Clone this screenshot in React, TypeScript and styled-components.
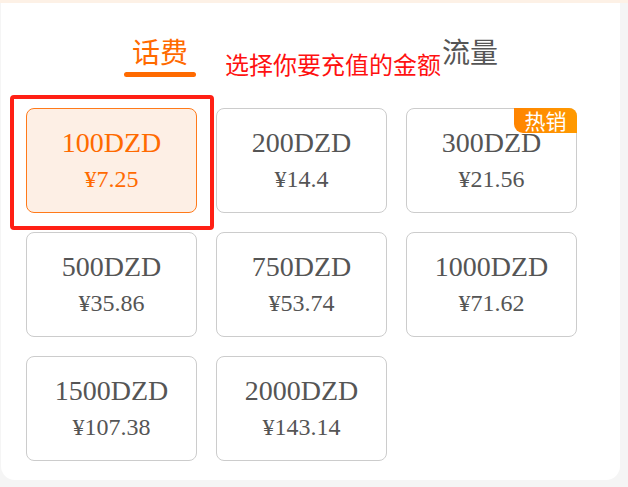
import React from 'react';
import styled, { createGlobalStyle } from 'styled-components';

const plans = [
  { amount: '100DZD', price: '¥7.25' },
  { amount: '200DZD', price: '¥14.4' },
  { amount: '300DZD', price: '¥21.56', hot: true },
  { amount: '500DZD', price: '¥35.86' },
  { amount: '750DZD', price: '¥53.74' },
  { amount: '1000DZD', price: '¥71.62' },
  { amount: '1500DZD', price: '¥107.38' },
  { amount: '2000DZD', price: '¥143.14' },
];

function App() {
  return (
    <>
      <GlobalStyle />
      <TopStrip />
      <Panel>
        <Tabs>
          <Tab $active>话费</Tab>
          <Tab>流量</Tab>
        </Tabs>
        <Hint>选择你要充值的金额</Hint>
        <Grid>
          {plans.map((p, i) => (
            <Option key={p.amount} $selected={i === 0}>
              {p.hot && <HotBadge>热销</HotBadge>}
              <Amount>{p.amount}</Amount>
              <Price>{p.price}</Price>
            </Option>
          ))}
        </Grid>
        <HighlightBox />
      </Panel>
    </>
  );
}

export default App;

const GlobalStyle = createGlobalStyle`
  html, body {
    margin: 0;
    padding: 0;
    background: #f5f5f5;
  }
  body {
    font-family: "Noto Sans CJK SC", "Noto Sans", sans-serif;
  }
`;

const TopStrip = styled.div`
  height: 3px;
  background: #fdf1e6;
`;

const Panel = styled.div`
  position: relative;
  width: 619px;
  height: 477px;
  margin-left: 1px;
  background: #ffffff;
  border-radius: 0 0 14px 14px;
  box-sizing: border-box;
  padding-top: 28px;
`;

const Tabs = styled.div`
  display: flex;
  padding-left: 123px;
  gap: 238px;
`;

const Tab = styled.div<{ $active?: boolean }>`
  position: relative;
  width: 72px;
  height: 44px;
  text-align: center;
  font-size: 28px;
  line-height: 40px;
  color: ${(p) => (p.$active ? '#ff6a00' : '#555555')};

  &::after {
    content: '';
    display: ${(p) => (p.$active ? 'block' : 'none')};
    position: absolute;
    left: 0;
    right: 0;
    bottom: -2px;
    height: 5px;
    border-radius: 3px;
    background: #ff6a00;
  }
`;

const Hint = styled.div`
  position: absolute;
  left: 224px;
  top: 44px;
  font-size: 24px;
  line-height: 34px;
  color: #ff1111;
`;

const Grid = styled.div`
  display: grid;
  grid-template-columns: repeat(3, 171px);
  grid-auto-rows: 105px;
  gap: 19px;
  padding: 33px 0 0 25px;
`;

const Option = styled.div<{ $selected?: boolean }>`
  position: relative;
  display: flex;
  flex-direction: column;
  align-items: center;
  justify-content: center;
  gap: 6px;
  box-sizing: border-box;
  padding-bottom: 2px;
  border: 1px solid ${(p) => (p.$selected ? '#ff7a1a' : '#cccccc')};
  border-radius: 8px;
  background: ${(p) => (p.$selected ? '#fdefe5' : '#ffffff')};
  color: ${(p) => (p.$selected ? '#ff6a00' : '#555555')};
  font-family: "Liberation Serif", "Times New Roman", serif;
`;

const Amount = styled.div`
  font-size: 28px;
  line-height: 32px;
`;

const Price = styled.div`
  font-size: 24px;
  line-height: 28px;
`;

const HotBadge = styled.div`
  position: absolute;
  top: -1px;
  right: -1px;
  width: 63px;
  height: 25px;
  border-radius: 0 8px 0 9px;
  background: linear-gradient(90deg, #ff8400, #ff9a00);
  color: #ffffff;
  font-family: "Noto Sans CJK SC", sans-serif;
  font-size: 21px;
  line-height: 25px;
  text-align: center;
`;

const HighlightBox = styled.div`
  position: absolute;
  left: 9px;
  top: 92px;
  width: 204px;
  height: 135px;
  box-sizing: border-box;
  border: 4px solid #ff2015;
  border-radius: 4px;
`;
